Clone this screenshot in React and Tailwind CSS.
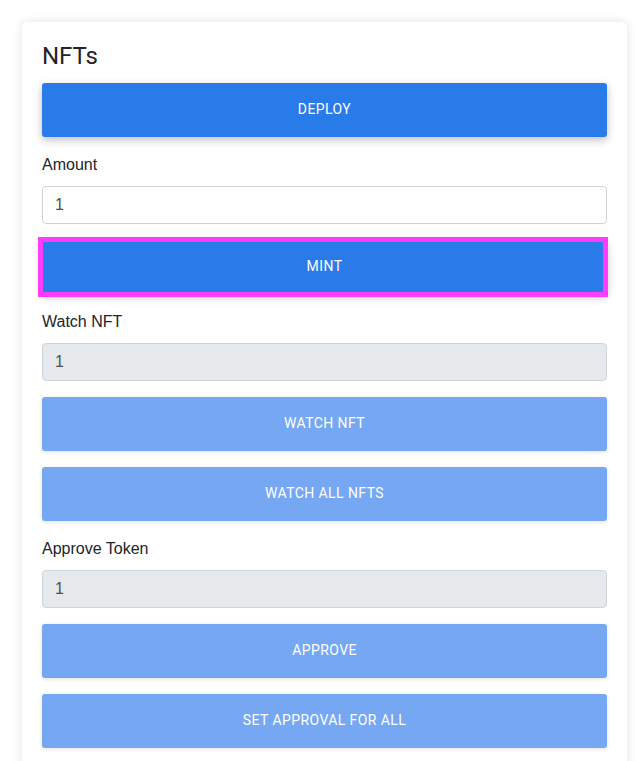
import React from "react";

function Btn({ children, light, ring }) {
  return (
    <div className="relative">
      <button
        className={
          "w-full h-[54px] rounded-[3px] text-white text-[14px] font-normal uppercase tracking-[0.03em] " +
          (light
            ? "bg-[#75a7f2] shadow-[0_1px_4px_rgba(0,0,0,0.12)]"
            : "bg-[#2a7bea] shadow-[0_3px_8px_rgba(0,0,0,0.25)]")
        }
        style={{ fontFamily: "Roboto, sans-serif" }}
      >
        {children}
      </button>
      {ring && (
        <span className="pointer-events-none absolute top-[-3px] bottom-[-3px] left-[-4px] right-[-1px] border-[5px] border-[#ff3cfa]" />
      )}
    </div>
  );
}

function Field({ label, disabled }) {
  return (
    <div className="flex flex-col">
      <label
        className="text-[16px] leading-[24px] text-[#212529] mb-[9px]"
        style={{ fontFamily: '"Liberation Sans", Arial, sans-serif' }}
      >
        {label}
      </label>
      <div
        className={
          "h-[38px] rounded-[4px] border border-[#ced4da] px-3 flex items-center text-[16px] text-[#495057] " +
          (disabled ? "bg-[#e6e9ec]" : "bg-white")
        }
        style={{ fontFamily: '"Liberation Sans", Arial, sans-serif' }}
      >
        1
      </div>
    </div>
  );
}

export default function App() {
  return (
    <div className="min-h-screen bg-white pl-[22px] pt-[22px]">
      <div className="w-[605px] rounded-[5px] bg-white shadow-[0_0_10px_rgba(0,0,0,0.12)] px-5 pt-5 pb-10">
        <h2
          className="text-[24px] leading-[1.2] text-[#212529] mb-3"
          style={{ fontFamily: "Roboto, sans-serif" }}
        >
          NFTs
        </h2>
        <div className="flex flex-col gap-4">
          <Btn>Deploy</Btn>
          <Field label="Amount" />
          <Btn ring>Mint</Btn>
          <Field label="Watch NFT" disabled />
          <Btn light>Watch NFT</Btn>
          <Btn light>Watch all NFTs</Btn>
          <Field label="Approve Token" disabled />
          <Btn light>Approve</Btn>
          <Btn light>Set approval for all</Btn>
        </div>
      </div>
    </div>
  );
}
